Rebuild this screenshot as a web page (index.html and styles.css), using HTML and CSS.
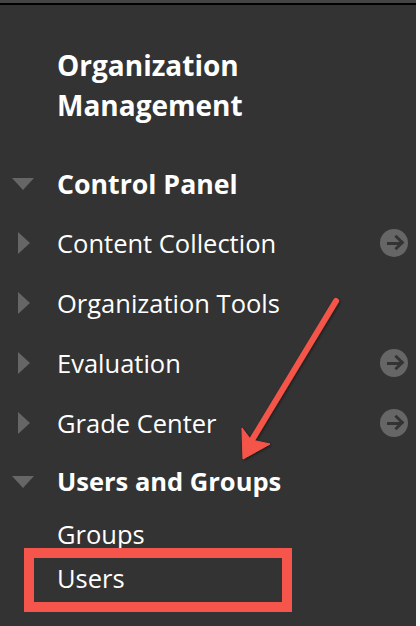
FILE: index.html
```html
<!DOCTYPE html>
<html lang="en">
<head>
  <meta charset="UTF-8">
  <meta name="viewport" content="width=device-width, initial-scale=1.0">
  <title>Organization Management</title>
  <link rel="stylesheet" href="styles.css">
</head>
<body>
  <div class="panel">
    <div class="topbar"></div>
    <h1 class="title">Organization<br>Management</h1>

    <ul class="menu">
      <li class="section top"><span class="tri down"></span>Control Panel</li>
      <li class="item"><span class="tri right"></span>Content Collection<span class="go"></span></li>
      <li class="item"><span class="tri right"></span>Organization Tools</li>
      <li class="item"><span class="tri right"></span>Evaluation<span class="go"></span></li>
      <li class="item"><span class="tri right"></span>Grade Center<span class="go"></span></li>
      <li class="section group"><span class="tri down"></span>Users and Groups</li>
      <li class="sub">Groups</li>
      <li class="sub highlight">Users</li>
    </ul>

    <svg class="pointer" width="420" height="626" viewBox="0 0 420 626">
      <defs>
        <filter id="sh" x="-20%" y="-20%" width="140%" height="140%">
          <feDropShadow dx="1" dy="1" stdDeviation="1.5" flood-color="#000" flood-opacity="0.5"/>
        </filter>
      </defs>
      <g filter="url(#sh)" fill="#f5554a" stroke="#f5554a">
        <line x1="336" y1="301" x2="252" y2="440" stroke-width="6" stroke-linecap="round"/>
        <polygon points="243,459 242,428 251,440 270,444" stroke-width="1" stroke-linejoin="round"/>
      </g>
    </svg>
  </div>
</body>
</html>
```

FILE: styles.css
```css
body {
  margin: 0;
  background-color: #f8f8f8;
  font-family: "Open Sans", sans-serif;
}
.panel {
  position: relative;
  width: 416px;
  height: 626px;
  background-color: #333;
  color: #fff;
  overflow: hidden;
}
.topbar {
  height: 3px;
  background: #444;
  border-bottom: 2px solid #000;
}
.title {
  margin: 0;
  padding: 40px 0 0 57px;
  font-size: 28px;
  font-weight: 700;
  line-height: 40px;
}
.menu {
  list-style: none;
  margin: 39px 0 0;
  padding: 0;
}
.menu li {
  position: relative;
  height: 60px;
  line-height: 60px;
  padding-left: 57px;
  font-size: 25.5px;
  white-space: nowrap;
}
.menu .section {
  font-weight: 700;
}
.menu .top {
  height: 40px;
  line-height: 40px;
  margin-bottom: 9px;
  font-size: 26.7px;
}
.menu .group {
  height: 59px;
  line-height: 57px;
}
.menu .sub {
  height: 44px;
  line-height: 44px;
}
.tri {
  position: absolute;
  width: 0;
  height: 0;
}
.tri.down {
  left: 12px;
  top: 50%;
  margin-top: -6px;
  border-left: 11px solid transparent;
  border-right: 11px solid transparent;
  border-top: 12px solid #666;
}
.group .tri.down {
  margin-top: -7px;
}
.tri.right {
  left: 18px;
  top: 50%;
  margin-top: -11px;
  border-top: 11px solid transparent;
  border-bottom: 11px solid transparent;
  border-left: 12px solid #666;
}
.go {
  position: absolute;
  right: 8px;
  top: 50%;
  margin-top: -14px;
  width: 28px;
  height: 28px;
  border-radius: 50%;
  background: #666;
}
.go::before {
  content: "";
  position: absolute;
  left: 7px;
  top: 12.5px;
  width: 13px;
  height: 3px;
  background: #333;
}
.go::after {
  content: "";
  position: absolute;
  left: 11px;
  top: 8px;
  width: 8px;
  height: 8px;
  border-top: 3px solid #333;
  border-right: 3px solid #333;
  transform: rotate(45deg);
}
.highlight::before {
  content: "";
  position: absolute;
  left: 24px;
  top: -8px;
  width: 248px;
  height: 44px;
  border: 10px solid #f5554a;
}
.pointer {
  position: absolute;
  left: 0;
  top: 0;
  pointer-events: none;
}
```
